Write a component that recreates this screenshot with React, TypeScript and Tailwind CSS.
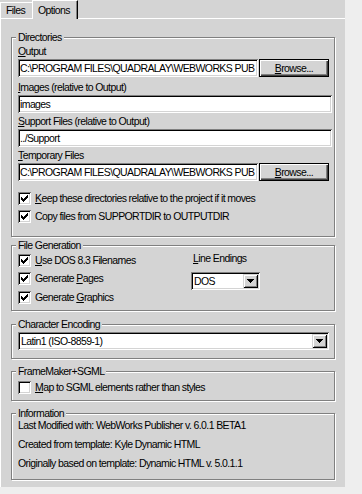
import type { ReactNode } from "react";

const SUNKEN =
  "bg-white shadow-[inset_1px_1px_0_#808080,inset_-1px_-1px_0_#ffffff,inset_2px_2px_0_#000000,inset_-2px_-2px_0_#d4d4d4]";
const RAISED =
  "bg-[#d4d4d4] shadow-[inset_1px_1px_0_#d4d4d4,inset_-1px_-1px_0_#000000,inset_2px_2px_0_#ffffff,inset_-2px_-2px_0_#808080]";
const BUTTON =
  "ml-[1px] w-[70px] h-[18px] border border-black bg-[#d4d4d4] shadow-[inset_1px_1px_0_#ffffff,inset_-1px_-1px_0_#404040,inset_-2px_-2px_0_#808080] flex items-center justify-center leading-[13px]";

function U({ children }: { children: ReactNode }) {
  return <span className="underline underline-offset-[1px]">{children}</span>;
}

function Label({ children }: { children: ReactNode }) {
  return <div className="h-[13px] leading-[13px] whitespace-nowrap">{children}</div>;
}

function InfoLine({ children, className }: { children: ReactNode; className: string }) {
  return <div className={`h-[11px] leading-[11px] whitespace-nowrap ${className}`}>{children}</div>;
}

function Field({ value, className }: { value: string; className: string }) {
  return (
    <div
      className={`${SUNKEN} h-[18px] pl-[2px] leading-[18px] overflow-hidden whitespace-nowrap ${className}`}
    >
      {value}
    </div>
  );
}

function Arrow() {
  return (
    <svg width="7" height="4" viewBox="0 0 7 4" shapeRendering="crispEdges">
      <rect x="0" y="0" width="7" height="1" fill="#000" />
      <rect x="1" y="1" width="5" height="1" fill="#000" />
      <rect x="2" y="2" width="3" height="1" fill="#000" />
      <rect x="3" y="3" width="1" height="1" fill="#000" />
    </svg>
  );
}

function Select({ value, className }: { value: string; className: string }) {
  return (
    <div className={`${SUNKEN} h-[18px] flex items-center pl-[3px] ${className}`}>
      <span className="whitespace-nowrap leading-[14px]">{value}</span>
      <div className={`${RAISED} ml-auto mr-[2px] w-[15px] h-[14px] flex items-center justify-center`}>
        <Arrow />
      </div>
    </div>
  );
}

function CheckMark() {
  return (
    <svg width="7" height="7" viewBox="0 0 7 7" shapeRendering="crispEdges">
      <rect x="6" y="0" width="1" height="1" fill="#000" />
      <rect x="5" y="1" width="2" height="1" fill="#000" />
      <rect x="0" y="2" width="1" height="1" fill="#000" />
      <rect x="4" y="2" width="3" height="1" fill="#000" />
      <rect x="0" y="3" width="2" height="1" fill="#000" />
      <rect x="3" y="3" width="3" height="1" fill="#000" />
      <rect x="0" y="4" width="5" height="1" fill="#000" />
      <rect x="1" y="5" width="3" height="1" fill="#000" />
      <rect x="2" y="6" width="1" height="1" fill="#000" />
    </svg>
  );
}

function Check({
  checked,
  className = "",
  children,
}: {
  checked?: boolean;
  className?: string;
  children: ReactNode;
}) {
  return (
    <div className={`flex items-center h-[13px] ${className}`}>
      <div className={`${SUNKEN} w-[13px] h-[13px] shrink-0 flex items-center justify-center`}>
        {checked && <CheckMark />}
      </div>
      <span className="ml-[4px] leading-[13px] whitespace-nowrap">{children}</span>
    </div>
  );
}

function Group({
  title,
  className,
  children,
}: {
  title: string;
  className: string;
  children: ReactNode;
}) {
  return (
    <div
      className={`relative w-[324px] border border-[#808080] shadow-[inset_1px_1px_0_#ffffff,1px_1px_0_#ffffff] ${className}`}
    >
      <div className="absolute left-[4px] top-[-6px] h-[11px] leading-[11px] px-[2px] bg-[#d4d4d4] whitespace-nowrap">
        {title}
      </div>
      {children}
    </div>
  );
}

export default function App() {
  return (
    <div className="w-full h-screen bg-[#eeeeee] text-black text-[10.5px] tracking-[-0.6px] font-['Liberation_Sans',Arial,sans-serif]">
      <div className="w-[345px] bg-[#d4d4d4]">
        {/* tabs */}
        <div className="flex items-end h-[18px]">
          <div className="h-[16px] w-[32px] border-t border-l border-white pl-[5px] flex items-center">
            Files
          </div>
          <div className="relative z-10 h-[19px] mb-[-1px] w-[46px] border-t border-l border-r border-white border-r-black shadow-[inset_-1px_0_0_#808080] bg-[#d4d4d4] pl-[5px] pt-[2px] flex items-center">
            Options
          </div>
        </div>

        {/* panel */}
        <div className="h-[469px] border-t border-l border-white pl-[10px] pt-[18px]">
          <Group title="Directories" className="h-[200px] pl-[6px] pt-[7px]">
            <Label>
              <U>O</U>utput
            </Label>
            <div className="flex mt-[1px]">
              <Field className="w-[240px]" value="C:\PROGRAM FILES\QUADRALAY\WEBWORKS PUB" />
              <div className={BUTTON}>
                <span>
                  <U>B</U>rowse...
                </span>
              </div>
            </div>
            <div className="mt-[4px]">
              <Label>
                <U>I</U>mages (relative to Output)
              </Label>
            </div>
            <Field className="mt-[1px] w-[314px]" value="images" />
            <div className="mt-[2px]">
              <Label>
                <U>S</U>upport Files (relative to Output)
              </Label>
            </div>
            <Field className="mt-[1px] w-[314px]" value="../Support" />
            <div className="mt-[2px]">
              <Label>
                <U>T</U>emporary Files
              </Label>
            </div>
            <div className="flex mt-[1px]">
              <Field className="w-[240px]" value="C:\PROGRAM FILES\QUADRALAY\WEBWORKS PUB" />
              <div className={BUTTON}>
                <span>
                  <U>B</U>rowse...
                </span>
              </div>
            </div>
            <Check checked className="mt-[11px]">
              <U>K</U>eep these directories relative to the project if it moves
            </Check>
            <Check checked className="mt-[5px]">
              Copy files from SUPPORTDIR to OUTPUTDIR
            </Check>
          </Group>

          <Group title="File Generation" className="mt-[8px] h-[66px] pl-[6px] flex">
            <div className="w-[173px]">
              <Check checked className="mt-[8px]">
                <U>U</U>se DOS 8.3 Filenames
              </Check>
              <Check checked className="mt-[5px]">
                Generate <U>P</U>ages
              </Check>
              <Check checked className="mt-[6px]">
                Generate <U>G</U>raphics
              </Check>
            </div>
            <div className="pt-[6px]">
              <div className="pl-[2px]">
                <Label>
                  <U>L</U>ine Endings
                </Label>
              </div>
              <Select className="mt-[7px] w-[69px]" value="DOS" />
            </div>
          </Group>

          <Group title="Character Encoding" className="mt-[13px] h-[35px] pl-[6px] pt-[7px]">
            <Select className="w-[311px]" value="Latin1 (ISO-8859-1)" />
          </Group>

          <Group title="FrameMaker+SGML" className="mt-[12px] h-[30px] pl-[6px] pt-[9px]">
            <Check>
              <U>M</U>ap to SGML elements rather than styles
            </Check>
          </Group>

          <Group title="Information" className="mt-[12px] h-[67px] pl-[6px] pt-[6px]">
            <InfoLine className="">Last Modified with: WebWorks Publisher v. 6.0.1 BETA1</InfoLine>
            <InfoLine className="mt-[8px]">Created from template: Kyle Dynamic HTML</InfoLine>
            <InfoLine className="mt-[8px]">Originally based on template: Dynamic HTML v. 5.0.1.1</InfoLine>
          </Group>
        </div>
      </div>
    </div>
  );
}
